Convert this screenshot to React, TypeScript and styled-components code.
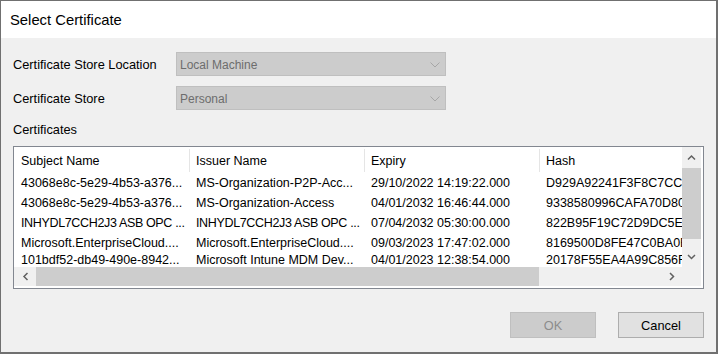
import React from "react";
import styled, { createGlobalStyle } from "styled-components";

const GlobalStyle = createGlobalStyle`
  html, body { margin: 0; padding: 0; background: #ffffff; }
  body { font-family: "Segoe UI", "Liberation Sans", Arial, sans-serif; }
`;

const Window = styled.div`
  width: 718px;
  height: 354px;
  box-sizing: border-box;
  border-style: solid;
  border-color: #707070;
  border-width: 1px 2px 2px 1px;
  background: #f0f0f0;
  display: flex;
  flex-direction: column;
  color: #000;
`;

const TitleBar = styled.div`
  height: 37px;
  flex: none;
  background: #ffffff;
  display: flex;
  align-items: center;
  padding: 1px 0 0 9px;
  box-sizing: border-box;
  font-size: 14.8px;
`;

const Body = styled.div`
  flex: 1;
  display: flex;
  flex-direction: column;
  padding: 14px 12px 0 12px;
`;

const FormGrid = styled.div`
  display: grid;
  grid-template-columns: 163px 270px;
  grid-auto-rows: 24px;
  row-gap: 10px;
  align-items: center;
`;

const Label = styled.div`
  font-size: 12.8px;
  line-height: 16px;
  padding-top: 1px;
`;

const SectionLabel = styled(Label)`
  margin: 11px 0 8px;
`;

const Combo = styled.div`
  height: 24px;
  box-sizing: border-box;
  border: 1px solid #bfbfbf;
  background: #cccccc;
  color: #6d6d6d;
  font-size: 12px;
  display: flex;
  align-items: center;
  justify-content: space-between;
  padding: 1px 5px 0 3px;
`;

const ListBox = styled.div`
  height: 143px;
  box-sizing: border-box;
  border: 1px solid #828790;
  background: #ffffff;
  padding: 0 2px 2px 0;
  display: grid;
  grid-template-columns: 1fr 19px;
  grid-template-rows: 120px 19px;
`;

const DataArea = styled.div`
  overflow: hidden;
  padding-left: 1px;
  font-size: 12.5px;
`;

const HeaderRow = styled.div`
  display: flex;
  height: 26px;
`;

const HeaderCell = styled.div`
  flex: none;
  width: 175px;
  display: flex;
  align-items: center;
`;

const HeaderText = styled.div`
  flex: 1;
  padding: 1px 0 0 6px;
  white-space: nowrap;
`;

const Divider = styled.div`
  width: 1px;
  height: 23px;
  background: #e5e5e5;
`;

const DataRow = styled.div<{ $h: number }>`
  display: flex;
  height: ${(p) => p.$h}px;
  line-height: ${(p) => p.$h + 1}px;
`;

const Cell = styled.div<{ $tight?: boolean }>`
  flex: none;
  width: 175px;
  box-sizing: border-box;
  padding-left: 6px;
  white-space: nowrap;
  overflow: hidden;
  letter-spacing: ${(p) => (p.$tight ? "-0.35px" : "normal")};
`;

const VScroll = styled.div`
  background: #f0f0f0;
  display: flex;
  flex-direction: column;
`;

const HScroll = styled.div`
  background: #f0f0f0;
  display: flex;
`;

const ArrowBtn = styled.div<{ $w?: number; $h?: number }>`
  flex: none;
  width: ${(p) => (p.$w ? `${p.$w}px` : "auto")};
  height: ${(p) => (p.$h ? `${p.$h}px` : "auto")};
  display: flex;
  align-items: center;
  justify-content: center;
`;

const Thumb = styled.div<{ $w?: number; $h?: number }>`
  flex: none;
  background: #cdcdcd;
  width: ${(p) => (p.$w ? `${p.$w}px` : "auto")};
  height: ${(p) => (p.$h ? `${p.$h}px` : "auto")};
`;

const Track = styled.div`
  flex: 1;
`;

const Corner = styled.div`
  background: #f0f0f0;
`;

const Footer = styled.div`
  display: flex;
  justify-content: flex-end;
  gap: 22px;
  margin-top: 23px;
`;

const Button = styled.div<{ $disabled?: boolean }>`
  width: 86px;
  height: 26px;
  box-sizing: border-box;
  display: flex;
  align-items: center;
  justify-content: center;
  padding-top: 1px;
  font-size: 12.8px;
  border: 1px solid ${(p) => (p.$disabled ? "#bfbfbf" : "#adadad")};
  background: ${(p) => (p.$disabled ? "#cccccc" : "#e1e1e1")};
  color: ${(p) => (p.$disabled ? "#8c8c8c" : "#000000")};
`;

type Dir = "up" | "down" | "left" | "right";

const Chevron = ({ dir, color = "#606060" }: { dir: Dir; color?: string }) => {
  const pts: Record<Dir, string> = {
    up: "1,5.5 4.5,2 8,5.5",
    down: "1,2 4.5,5.5 8,2",
    left: "5.5,1 2,4.5 5.5,8",
    right: "2,1 5.5,4.5 2,8",
  };
  const horiz = dir === "up" || dir === "down";
  return (
    <svg width={horiz ? 9 : 7} height={horiz ? 7 : 9} viewBox={horiz ? "0 0 9 7" : "0 0 7 9"}>
      <polyline points={pts[dir]} fill="none" stroke={color} strokeWidth="1.5" />
    </svg>
  );
};

const ComboChevron = () => (
  <svg width="10" height="6" viewBox="0 0 10 6">
    <polyline points="0.5,0.5 5,5 9.5,0.5" fill="none" stroke="#a6a6a6" strokeWidth="1" />
  </svg>
);

const columns = ["Subject Name", "Issuer Name", "Expiry", "Hash"];

const rows: { h: number; tight?: boolean; cells: string[] }[] = [
  {
    h: 20,
    cells: [
      "43068e8c-5e29-4b53-a376...",
      "MS-Organization-P2P-Acc...",
      "29/10/2022 14:19:22.000",
      "D929A92241F3F8C7CC1E4A7B",
    ],
  },
  {
    h: 20,
    cells: [
      "43068e8c-5e29-4b53-a376...",
      "MS-Organization-Access",
      "04/01/2032 16:46:44.000",
      "9338580996CAFA70D80C2B19",
    ],
  },
  {
    h: 20,
    tight: true,
    cells: [
      "INHYDL7CCH2J3 ASB OPC ...",
      "INHYDL7CCH2J3 ASB OPC ...",
      "07/04/2032 05:30:00.000",
      "822B95F19C72D9DC5EC3A0F1",
    ],
  },
  {
    h: 20,
    cells: [
      "Microsoft.EnterpriseCloud....",
      "Microsoft.EnterpriseCloud....",
      "09/03/2023 17:47:02.000",
      "8169500D8FE47C0BA0E5D3C2",
    ],
  },
  {
    h: 13,
    cells: [
      "101bdf52-db49-490e-8942...",
      "Microsoft Intune MDM Dev...",
      "04/01/2023 12:38:54.000",
      "20178F55EA4A99C856F7B1D0",
    ],
  },
];

export default function App() {
  return (
    <>
      <GlobalStyle />
      <Window>
        <TitleBar>Select Certificate</TitleBar>
        <Body>
          <FormGrid>
            <Label>Certificate Store Location</Label>
            <Combo>
              <span>Local Machine</span>
              <ComboChevron />
            </Combo>
            <Label>Certificate Store</Label>
            <Combo>
              <span>Personal</span>
              <ComboChevron />
            </Combo>
          </FormGrid>
          <SectionLabel>Certificates</SectionLabel>
          <ListBox>
            <DataArea>
              <HeaderRow>
                {columns.map((c) => (
                  <HeaderCell key={c}>
                    <HeaderText>{c}</HeaderText>
                    <Divider />
                  </HeaderCell>
                ))}
              </HeaderRow>
              {rows.map((r, i) => (
                <DataRow key={i} $h={r.h}>
                  {r.cells.map((c, j) => (
                    <Cell key={j} $tight={r.tight && j < 2}>
                      {c}
                    </Cell>
                  ))}
                </DataRow>
              ))}
            </DataArea>
            <VScroll>
              <ArrowBtn $h={21}>
                <Chevron dir="up" />
              </ArrowBtn>
              <Thumb $h={71} />
              <Track />
              <ArrowBtn $h={22}>
                <Chevron dir="down" />
              </ArrowBtn>
            </VScroll>
            <HScroll>
              <ArrowBtn $w={22}>
                <Chevron dir="left" />
              </ArrowBtn>
              <Thumb $w={503} />
              <Track />
              <ArrowBtn $w={21}>
                <Chevron dir="right" />
              </ArrowBtn>
            </HScroll>
            <Corner />
          </ListBox>
          <Footer>
            <Button $disabled>OK</Button>
            <Button>Cancel</Button>
          </Footer>
        </Body>
      </Window>
    </>
  );
}
